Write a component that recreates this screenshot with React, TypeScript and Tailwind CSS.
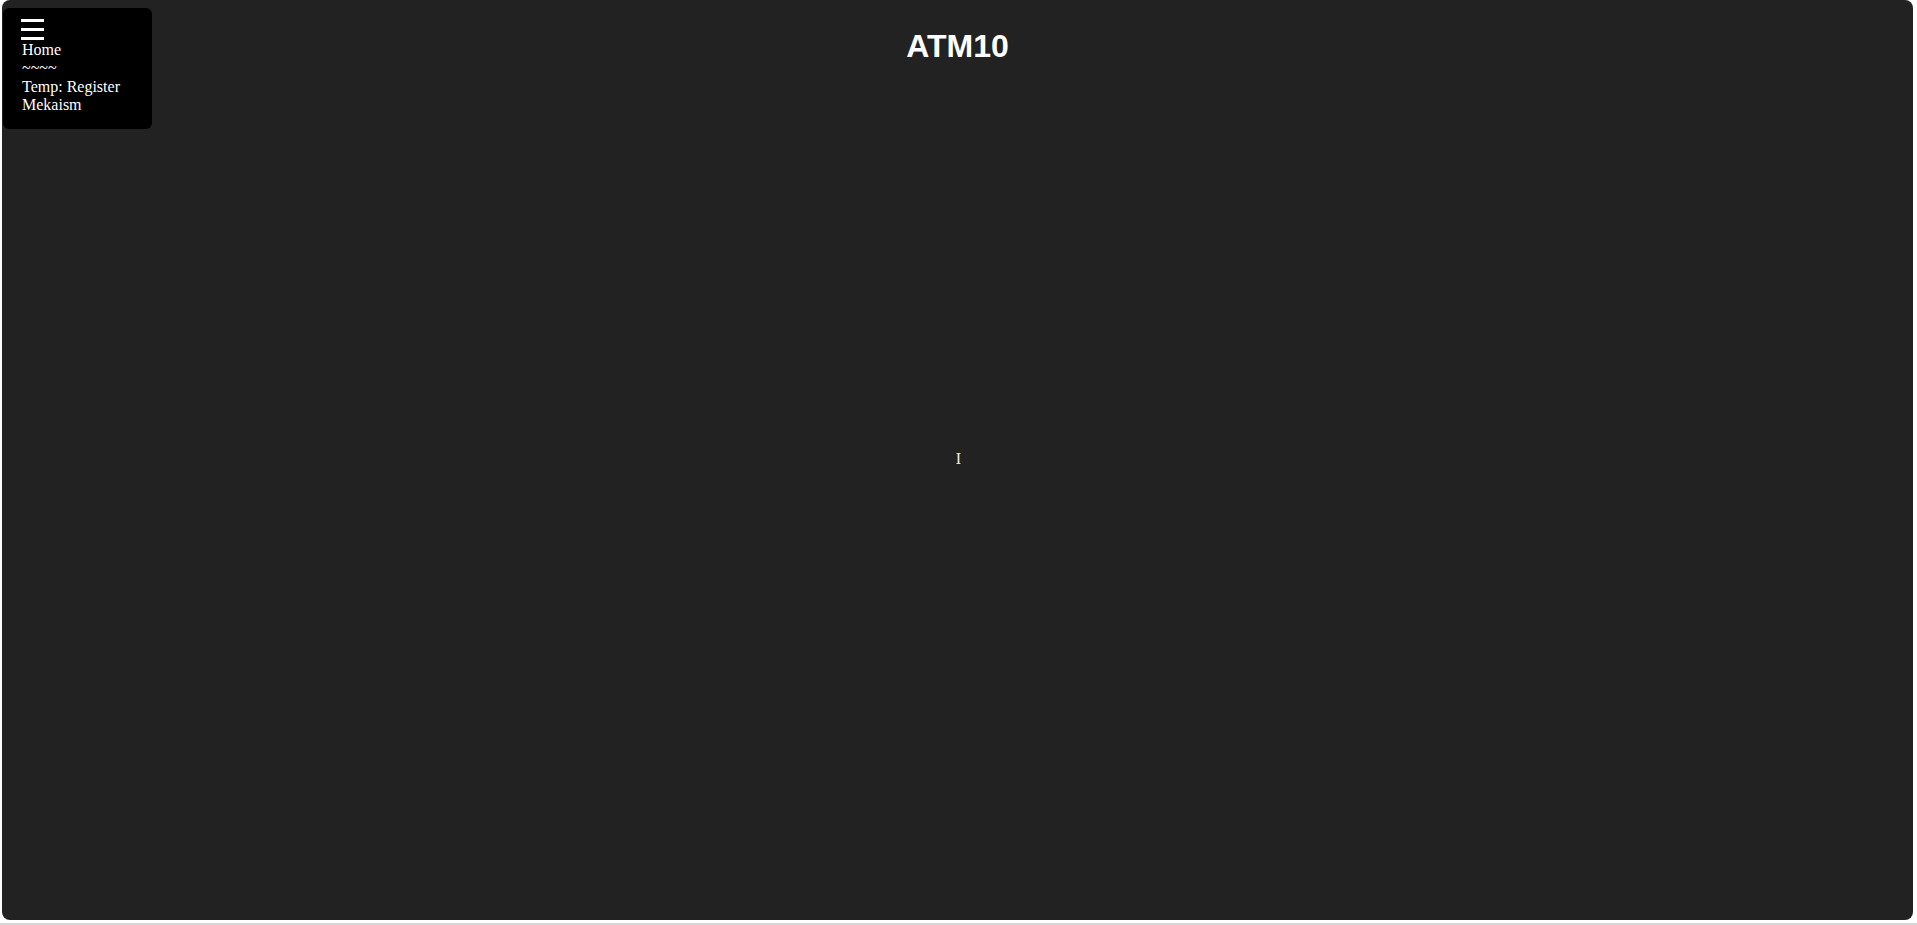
import React from "react";

function MenuPanel() {
  return (
    <nav className="col-start-1 row-start-1 self-start justify-self-start mt-[8px] ml-[1px] w-[149px] h-[121px] bg-black rounded-[6px] pl-[17px] pt-[11px] text-white font-['Liberation_Serif',serif] text-[16px] leading-[18.4px]">
      {/* Menu hamburguer */}
      <div className="flex flex-col gap-[6px] ml-[1px] w-[23px]">
        <span className="block h-[3px] bg-white" />
        <span className="block h-[3px] bg-white" />
        <span className="block h-[3px] bg-white" />
      </div>
      <ul className="pl-[2px] mt-[1px]">
        <li>Home</li>
        <li>~~~~</li>
        <li>Temp: Register</li>
        <li>Mekaism</li>
      </ul>
    </nav>
  );
}

export default function App() {
  return (
    <div className="h-[925px] w-full bg-white flex flex-col overflow-hidden">
      <main className="grid h-[920px] ml-[2px] mr-[4px] bg-[#222222] rounded-[8px]">
        <MenuPanel />

        {/* Título */}
        <h1 className="col-start-1 row-start-1 self-start justify-self-center mt-[28px] text-white font-['Liberation_Sans',Arial,sans-serif] font-bold text-[32px] leading-[37px]">
          ATM10
        </h1>

        {/* Conteúdo */}
        <div className="col-start-1 row-start-1 place-self-center text-[#f5f2ea] font-['Liberation_Serif',serif] text-[16px] leading-[18.4px] translate-x-[1px] -translate-y-[1px]">
          I
        </div>
      </main>
      <div className="mt-auto h-[2px] bg-[#d6d6d6]" />
    </div>
  );
}
